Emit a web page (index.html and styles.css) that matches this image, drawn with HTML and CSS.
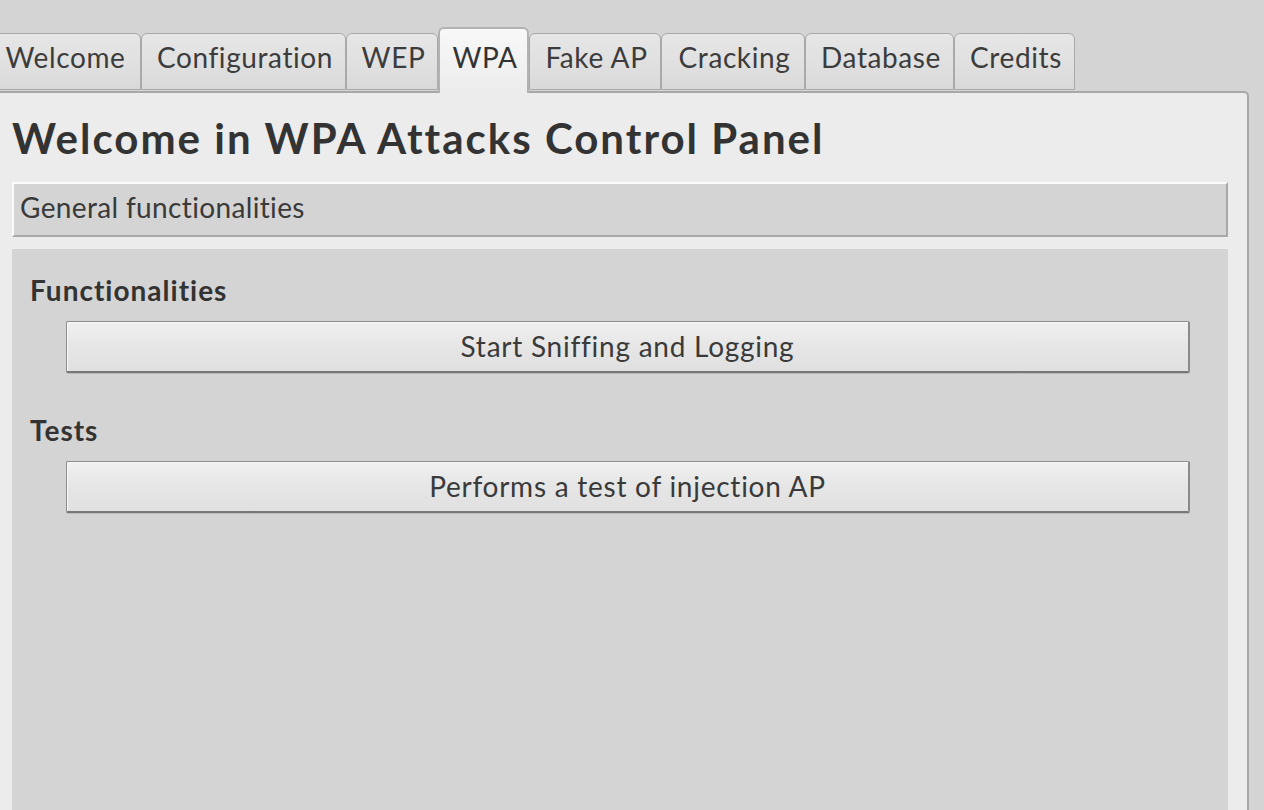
FILE: index.html
```html
<!DOCTYPE html>
<html lang="en">
<head>
<meta charset="utf-8">
<title>WPA Attacks Control Panel</title>
<link rel="stylesheet" href="styles.css">
</head>
<body>
  <nav class="tabs">
    <div class="tab tab-welcome">Welcome</div>
    <div class="tab tab-config">Configuration</div>
    <div class="tab tab-wep">WEP</div>
    <div class="tab tab-wpa tab-active">WPA</div>
    <div class="tab tab-fake">Fake AP</div>
    <div class="tab tab-cracking">Cracking</div>
    <div class="tab tab-database">Database</div>
    <div class="tab tab-credits">Credits</div>
  </nav>
  <main class="panel">
    <h1 class="title">Welcome in WPA Attacks Control Panel</h1>
    <div class="section-header">General functionalities</div>
    <section class="group">
      <h2 class="group-label">Functionalities</h2>
      <button class="action" type="button">Start Sniffing and Logging</button>
      <h2 class="group-label group-label-next">Tests</h2>
      <button class="action" type="button">Performs a test of injection AP</button>
    </section>
  </main>
</body>
</html>
```
FILE: styles.css
```css
* { box-sizing: border-box; }

html, body {
  margin: 0;
  padding: 0;
  height: 100%;
  overflow: hidden;
}

body {
  background: #d4d4d4;
  font-family: "Lato", "Noto Sans", sans-serif;
  font-size: 28px;
  letter-spacing: 0.6px;
  font-variant-ligatures: none;
  color: #333;
}

.tabs {
  display: flex;
  align-items: flex-end;
  padding-top: 27px;
  margin-left: -12px;
  position: relative;
  z-index: 1;
}

.tab {
  flex: none;
  height: 57px;
  padding: 6px 0 0 3px;
  line-height: 34px;
  text-align: center;
  border: 1px solid #a9a9a9;
  border-radius: 6px 6px 0 0;
  background: linear-gradient(#e6e6e6, #e0e0e0 55%, #d9d9d9);
  color: #3c3c3c;
  white-space: nowrap;
  margin-bottom: 1px;
}

.tab-welcome { width: 153px; padding-left: 2px; }
.tab-config { width: 205px; }
.tab-wep { width: 92px; }
.tab-wpa { width: 91px; }
.tab-fake { width: 132px; }
.tab-cracking { width: 144px; }
.tab-database { width: 149px; }
.tab-credits { width: 121px; }

.tab-active {
  height: 66px;
  padding-top: 11px;
  border: 2px solid #b2b2b2;
  border-bottom: none;
  background: linear-gradient(#f8f8f8, #ececec);
  color: #333;
  margin-bottom: -2px;
}

.panel {
  margin: 0 15px 0 -4px;
  height: 740px;
  padding: 0 19px 0 14px;
  border: 2px solid #a8a8a8;
  border-radius: 0 5px 0 0;
  background: #ececec;
}

.title {
  margin: 20px 0 19px;
  font-size: 42px;
  font-weight: 700;
  line-height: 1.2;
  letter-spacing: 2px;
  color: #333;
}

.section-header {
  height: 55px;
  padding: 7px 6px 0;
  line-height: 33.6px;
  background: #d4d4d4;
  border-top: 2px solid #fbfbfb;
  border-left: 2px solid #fbfbfb;
  border-right: 2px solid #a9a9a9;
  border-bottom: 2px solid #a9a9a9;
  color: #3a3a3a;
  letter-spacing: 0.35px;
}

.group {
  margin-top: 12px;
  height: 600px;
  padding: 25px 38px 0 18px;
  background: #d4d4d4;
  display: flex;
  flex-direction: column;
}

.group-label {
  margin: 0 0 13px;
  font-size: 28px;
  font-weight: 700;
  line-height: 1.2;
  letter-spacing: 1px;
  color: #333;
}

.group-label-next {
  margin-top: 41px;
}

.action {
  margin: 0 0 0 36px;
  height: 52px;
  font: inherit;
  letter-spacing: 0.75px;
  color: #3a3a3a;
  border: 1px solid #8c8c8c;
  border-bottom: 2px solid #777;
  border-right: 2px solid #8a8a8a;
  border-radius: 2px;
  background: linear-gradient(#f0f0f0, #e6e6e6 50%, #e0e0e0);
  box-shadow: inset 1px 1px 0 #fafafa, 0 1px 0 #bcbcbc;
  padding: 0;
  line-height: 1;
}
```
